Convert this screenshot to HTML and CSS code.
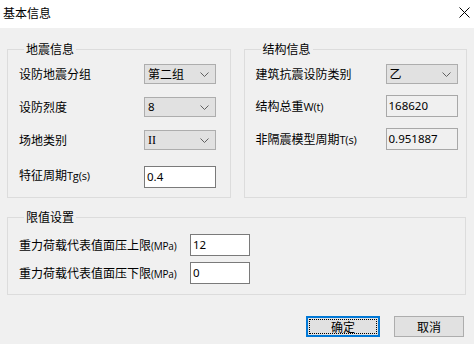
FILE: index.html
```html
<!DOCTYPE html>
<html lang="zh">
<head>
<meta charset="utf-8">
<title>基本信息</title>
<link rel="stylesheet" href="styles.css">
</head>
<body>
<div class="dialog">
  <div class="titlebar">
    <span class="title">基本信息</span>
    <svg class="close" width="11" height="11" viewBox="0 0 11 11"><path d="M0.5 0.5 L10.5 10.5 M10.5 0.5 L0.5 10.5" stroke="#000" stroke-width="1" fill="none"/></svg>
  </div>
  <div class="body">
    <div class="top">
      <fieldset class="group group-left">
        <legend>地震信息</legend>
        <div class="grid grid-left">
          <div class="label">设防地震分组</div>
          <div class="combo"><span>第二组</span><svg class="chev" width="9" height="5" viewBox="0 0 9 5"><path d="M0.5 0.5 L4.5 4.5 L8.5 0.5" stroke="#606060" fill="none"/></svg></div>
          <div class="label">设防烈度</div>
          <div class="combo"><span class="num">8</span><svg class="chev" width="9" height="5" viewBox="0 0 9 5"><path d="M0.5 0.5 L4.5 4.5 L8.5 0.5" stroke="#606060" fill="none"/></svg></div>
          <div class="label">场地类别</div>
          <div class="combo"><span class="serif">II</span><svg class="chev" width="9" height="5" viewBox="0 0 9 5"><path d="M0.5 0.5 L4.5 4.5 L8.5 0.5" stroke="#606060" fill="none"/></svg></div>
          <div class="label lbl-last">特征周期<span class="lat">Tg(s)</span></div>
          <div class="edit edit-last"><span class="num">0.4</span></div>
        </div>
      </fieldset>
      <fieldset class="group group-right">
        <legend>结构信息</legend>
        <div class="grid grid-right">
          <div class="label">建筑抗震设防类别</div>
          <div class="combo"><span>乙</span><svg class="chev" width="9" height="5" viewBox="0 0 9 5"><path d="M0.5 0.5 L4.5 4.5 L8.5 0.5" stroke="#606060" fill="none"/></svg></div>
          <div class="label">结构总重<span class="lat">W(t)</span></div>
          <div class="edit readonly"><span class="num">168620</span></div>
          <div class="label">非隔震模型周期<span class="lat">T(s)</span></div>
          <div class="edit readonly"><span class="num">0.951887</span></div>
        </div>
      </fieldset>
    </div>
    <fieldset class="group group-limit">
      <legend>限值设置</legend>
      <div class="grid grid-limit">
        <div class="label">重力荷载代表值面压上限<span class="lat small">(MPa)</span></div>
        <div class="edit"><span class="num">12</span></div>
        <div class="label">重力荷载代表值面压下限<span class="lat small">(MPa)</span></div>
        <div class="edit"><span class="num">0</span></div>
      </div>
    </fieldset>
    <div class="buttons">
      <div class="btn btn-default"><span class="focus">确定</span></div>
      <div class="btn btn-cancel">取消</div>
    </div>
  </div>
</div>
</body>
</html>
```
FILE: styles.css
```css
html, body {
  margin: 0;
  padding: 0;
}
body {
  width: 474px;
  height: 344px;
  overflow: hidden;
  background: #f0f0f0;
  font-family: "Noto Sans CJK SC", "Microsoft YaHei", sans-serif;
  font-size: 12px;
  color: #000;
}
.dialog {
  width: 474px;
  height: 344px;
  display: flex;
  flex-direction: column;
}
.titlebar {
  height: 28px;
  background: #fff;
  display: flex;
  align-items: center;
  justify-content: space-between;
  padding: 0 4px 0 3px;
}
.title {
  line-height: 14px;
  margin-top: -2px;
}
.close {
  margin-top: -3px;
}
.body {
  padding: 14px 7px 0 7px;
  display: flex;
  flex-direction: column;
}
.top {
  display: flex;
  align-items: stretch;
  gap: 13px;
}
.group {
  margin: 0;
  padding: 0;
  border: 1px solid #dcdcdc;
  min-width: 0;
}
.group legend {
  margin-left: 5px;
  padding: 0 2px;
  line-height: 14px;
  font-size: 12px;
}
.group-left {
  width: 224px;
  box-sizing: border-box;
  padding: 8px 0 12px 11px;
}
.group-right {
  width: 224px;
  box-sizing: border-box;
  padding: 8px 0 12px 11px;
}
.group-limit {
  margin-top: 12px;
  width: 459px;
  box-sizing: border-box;
  padding: 10px 0 10px 11px;
}
.grid {
  display: grid;
  align-items: center;
}
.grid-left {
  grid-template-columns: 125px 72px;
  grid-template-rows: 20px 20px 20px 22px;
  row-gap: 13px;
}
.grid-left .lbl-last, .grid-left .edit-last {
  margin-top: 3px;
}
.grid-right {
  grid-template-columns: 130px 72px;
  grid-template-rows: 20px 22px 22px;
  row-gap: 11px;
}
.grid-right .readonly:first-of-type {
  margin-top: 0;
}
.grid-limit {
  grid-template-columns: 171px 60px;
  grid-template-rows: 23px 22px;
  row-gap: 5px;
}
.label {
  line-height: 16px;
  white-space: nowrap;
}
.lat {
  font-family: "Open Sans", "Noto Sans", sans-serif;
  font-size: 11px;
  letter-spacing: -0.2px;
}
.lat.small {
  font-size: 10px;
}
.combo {
  height: 20px;
  box-sizing: border-box;
  border: 1px solid #adadad;
  background: #e1e1e1;
  display: flex;
  align-items: center;
  justify-content: space-between;
  padding: 0 6px 0 3px;
  line-height: 16px;
}
.combo .chev {
  margin-top: 1px;
}
.num {
  font-family: "Noto Sans", "Open Sans", sans-serif;
  font-size: 11.5px;
}
.serif {
  font-family: "Liberation Serif", serif;
  font-size: 12px;
}
.edit {
  height: 22px;
  box-sizing: border-box;
  border: 1px solid #7a7a7a;
  background: #fff;
  padding: 1px 0 0 2px;
  line-height: 16px;
  align-self: stretch;
}
.grid-limit .edit:first-of-type {
  height: 23px;
}
.readonly {
  background: #f0f0f0;
  border-color: #a8a8a8;
}
.buttons {
  margin-top: 21px;
  display: flex;
  justify-content: flex-end;
  gap: 14px;
  padding-right: 3px;
}
.btn {
  height: 21px;
  box-sizing: border-box;
  background: #e1e1e1;
  display: flex;
  align-items: center;
  justify-content: center;
  line-height: 14px;
}
.btn-default {
  width: 74px;
  border: 2px solid #0078d7;
  padding: 1px;
}
.btn-default .focus {
  flex: 1;
  align-self: stretch;
  border: 1px dotted #000;
  display: flex;
  align-items: center;
  justify-content: center;
}
.btn-cancel {
  width: 70px;
  border: 1px solid #adadad;
}
```
